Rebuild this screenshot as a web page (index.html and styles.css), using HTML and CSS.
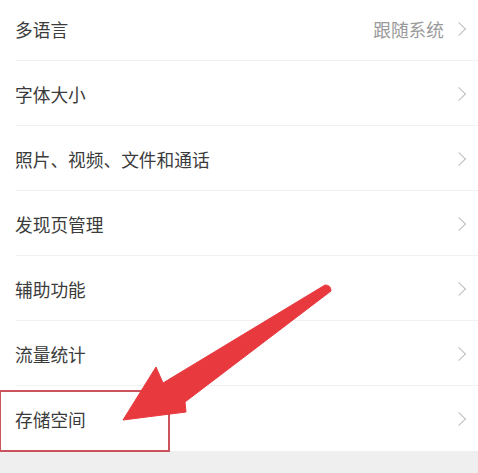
FILE: index.html
```html
<!DOCTYPE html>
<html lang="zh-CN">
<head>
    <meta charset="UTF-8">
    <meta name="viewport" content="width=device-width, initial-scale=1.0">
    <title>通用</title>
    <link rel="stylesheet" href="styles.css">
</head>
<body>
    <div class="page">
        <ul class="set-list">
            <li class="item"><span class="label">多语言</span><span class="value">跟随系统</span><i class="arrow"></i></li>
            <li class="item"><span class="label">字体大小</span><i class="arrow"></i></li>
            <li class="item"><span class="label">照片、视频、文件和通话</span><i class="arrow"></i></li>
            <li class="item"><span class="label">发现页管理</span><i class="arrow"></i></li>
            <li class="item"><span class="label">辅助功能</span><i class="arrow"></i></li>
            <li class="item"><span class="label">流量统计</span><i class="arrow"></i></li>
            <li class="item"><span class="label">存储空间</span><i class="arrow"></i></li>
        </ul>
        <div class="footer-gap"></div>

        <!-- 标注：红框 + 箭头 -->
        <div class="mark-box"></div>
        <svg class="mark-arrow" width="478" height="473" viewBox="0 0 478 473">
            <path d="M325 285 Q331 285 331 291 L185 402 L186 412 L123 420 L156 367 L163 383 Z" fill="#e8393f" stroke="#e8393f" stroke-width="1" stroke-linejoin="round"/>
        </svg>
    </div>
</body>
</html>
```

FILE: styles.css
```css
* {
    margin: 0;
    padding: 0;
}
ul,li {
    list-style-type: none;
}
body {
    background: #fff;
    font-family: "Noto Sans CJK SC", "Noto Sans", sans-serif;
}
.page {
    position: relative;
    width: 478px;
    height: 473px;
    overflow: hidden;
}
.set-list {
    margin-top: -4px;
}
.set-list .item {
    position: relative;
    display: flex;
    align-items: center;
    height: 65px;
    padding-left: 15px;
    padding-right: 14px;
}
/* 分割线从左边 16px 开始 */
.set-list .item:after {
    content: '';
    position: absolute;
    left: 16px;
    right: 0;
    bottom: 0;
    height: 1px;
    background: #f1f1f1;
}
.set-list .item:last-child:after {
    display: none;
}
.set-list .label {
    flex: 1;
    font-size: 17.7px;
    color: #3b3b3b;
}
.set-list .value {
    font-size: 17.7px;
    color: #9a9a9a;
    margin-right: 10px;
}
.set-list .arrow {
    width: 9px;
    height: 9px;
    border-top: 1.5px solid #bdbdbd;
    border-right: 1.5px solid #bdbdbd;
    transform: rotate(45deg);
}
.footer-gap {
    height: 30px;
    background: #efefef;
}
.mark-box {
    position: absolute;
    left: -1px;
    top: 390px;
    width: 167px;
    height: 58px;
    border: 2px solid #c9545d;
}
.mark-arrow {
    position: absolute;
    left: 0;
    top: 0;
}
```
